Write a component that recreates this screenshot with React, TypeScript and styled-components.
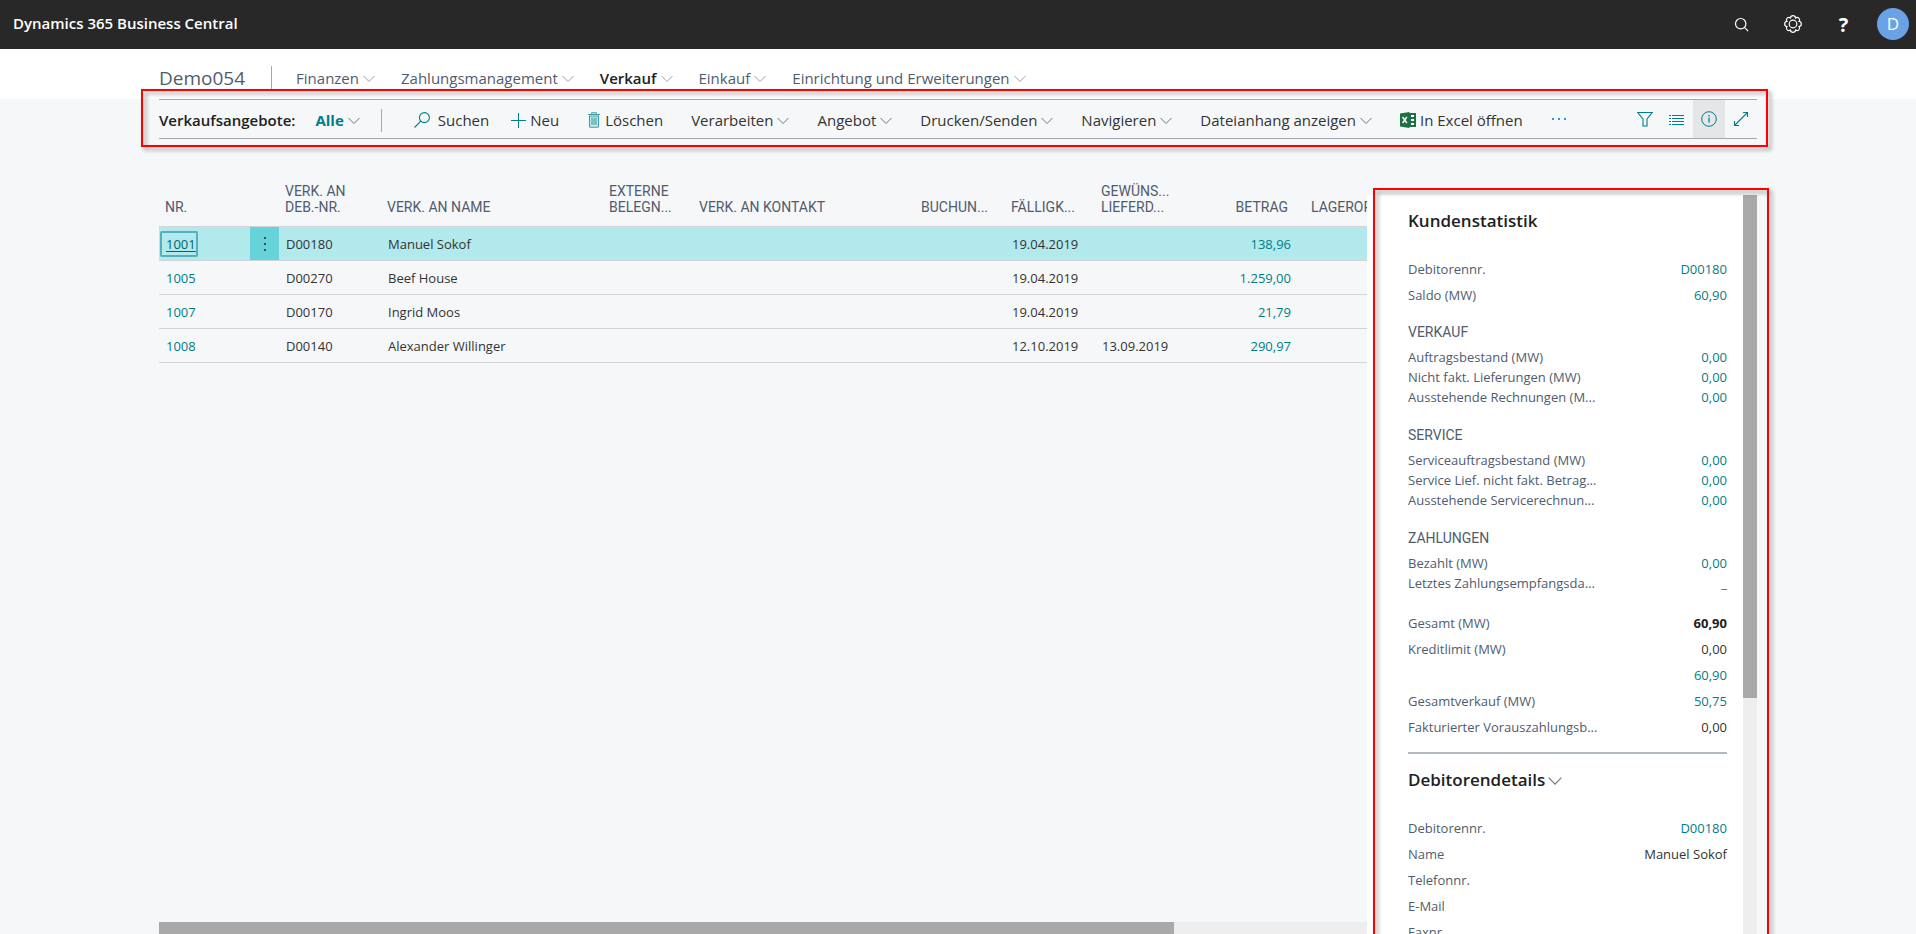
import React from "react";
import styled, { createGlobalStyle, css } from "styled-components";

const teal = "#007e87";
const slate = "#505c6d";
const ink = "#212121";

const GlobalStyle = createGlobalStyle`
  *, *::before, *::after { box-sizing: border-box; }
  body {
    margin: 0;
    background: #f6f7f9;
    color: ${ink};
    font-family: "Open Sans", "Noto Sans", sans-serif;
    font-size: 13px;
  }
  a { color: inherit; text-decoration: none; }
  button {
    margin: 0;
    padding: 0;
    border: 0;
    background: none;
    color: inherit;
    font: inherit;
    cursor: pointer;
  }
  svg { display: block; flex: none; }
`;

const Page = styled.div`
  display: flex;
  flex-direction: column;
  height: 100vh;
  overflow: hidden;
`;

/* ---------- top bar ---------- */

const TopBar = styled.header`
  display: flex;
  flex: none;
  align-items: center;
  justify-content: space-between;
  height: 49px;
  padding: 0 7px 1px 13px;
  background: #282828;
  color: #fff;
`;

const ProductName = styled.a`
  font-size: 15px;
  font-weight: 600;
  line-height: 20px;
  padding-bottom: 2px;
`;

const TopActions = styled.div`
  display: flex;
  align-items: center;
`;

const TopButton = styled.button`
  display: flex;
  align-items: center;
  justify-content: center;
  width: 51px;
  height: 48px;
  font-size: 20px;
  font-weight: 700;
`;

const Avatar = styled.button`
  width: 32px;
  height: 32px;
  margin-left: 8px;
  border-radius: 50%;
  background: #6aa2e6;
  font-size: 17px;
  line-height: 32px;
`;

/* ---------- role navigation ---------- */

const NavBar = styled.nav`
  display: flex;
  flex: none;
  align-items: center;
  height: 50px;
  padding: 7px 159px 0;
  background: #fff;
  color: ${slate};
`;

const Company = styled.a`
  font-size: 19px;
  line-height: 26px;
`;

const Divider = styled.span`
  width: 1px;
  height: 23px;
  background: #a1a8b3;
`;

const NavDivider = styled(Divider)`
  margin-left: 26px;
`;

const NavItems = styled.div`
  display: flex;
  gap: 26px;
  margin-left: 24px;
`;

const NavItem = styled.button<{ $active?: boolean }>`
  display: flex;
  align-items: center;
  gap: 4px;
  font-size: 15px;
  line-height: 20px;
  color: ${(p) => (p.$active ? ink : slate)};
  font-weight: ${(p) => (p.$active ? 600 : 400)};
  svg { color: #9aa2ad; }
`;

/* ---------- action bar ---------- */

const Content = styled.div`
  display: flex;
  flex: 1;
  flex-direction: column;
  min-height: 0;
  padding: 0 159px;
`;

const highlight = css`
  &::after {
    content: "";
    position: absolute;
    z-index: 2;
    border: 2px solid #f00;
    filter: drop-shadow(3px 3px 2px rgba(0, 0, 0, 0.4));
    pointer-events: none;
  }
`;

const ActionBar = styled.div`
  position: relative;
  display: flex;
  flex: none;
  justify-content: space-between;
  height: 40px;
  border-top: 1px solid #a1a8b3;
  border-bottom: 1px solid #a1a8b3;
  ${highlight}
  &::after { inset: -11px -11px -9px -18px; }
`;

const ActionSide = styled.div`
  display: flex;
  align-items: center;
  padding-top: 2px;
  font-size: 15px;
  line-height: 20px;
  white-space: nowrap;
`;

const ListTitle = styled.h1`
  margin: 0 20px 0 0;
  font-size: 15px;
  font-weight: 600;
`;

const ViewPicker = styled.button`
  display: flex;
  align-items: center;
  gap: 4px;
  margin-right: 21px;
  color: ${teal};
  font-weight: 700;
  svg { color: #6d7683; }
`;

const SearchButton = styled.button`
  display: flex;
  align-items: center;
  gap: 8px;
  margin: 0 21px 0 32px;
  color: #333;
  svg { color: ${teal}; }
`;

const Actions = styled.div`
  display: flex;
  gap: 28px;
`;

const Action = styled.button<{ $accent?: boolean }>`
  display: flex;
  align-items: center;
  gap: 4px;
  color: #333;
  svg { color: ${(p) => (p.$accent ? teal : "#6d7683")}; }
`;

const MoreButton = styled.button`
  height: 20px;
  svg { color: #3b93d6; }
`;

const ViewButtons = styled.div`
  display: flex;
`;

const ViewButton = styled.button<{ $pressed?: boolean }>`
  display: flex;
  align-items: center;
  justify-content: center;
  width: 32px;
  color: ${teal};
  background: ${(p) => (p.$pressed ? "#e4e6e8" : "transparent")};
`;

/* ---------- list ---------- */

const Workspace = styled.div`
  display: flex;
  flex: 1;
  min-height: 0;
`;

const ListPane = styled.main`
  display: flex;
  flex: 1;
  flex-direction: column;
  min-width: 0;
`;

const TableViewport = styled.div`
  flex: 1;
  min-height: 0;
  overflow: hidden;
`;

const Table = styled.table`
  width: 1436px;
  border-collapse: separate;
  border-spacing: 0;
  table-layout: fixed;
`;

const Col = styled.col<{ $width: number }>`
  width: ${(p) => p.$width}px;
`;

const HeadCell = styled.th<{ $numeric?: boolean }>`
  height: 88px;
  padding: 0 ${(p) => (p.$numeric ? 17 : 4)}px 11px 6px;
  border-bottom: 1px solid #d2d4d9;
  color: ${slate};
  font-family: Roboto, sans-serif;
  font-size: 14px;
  font-weight: 400;
  line-height: 16px;
  text-align: ${(p) => (p.$numeric ? "right" : "left")};
  text-transform: uppercase;
  vertical-align: bottom;
  white-space: pre-line;
`;

const Row = styled.tr<{ $selected?: boolean }>`
  background: ${(p) => (p.$selected ? "#b2e9ec" : "transparent")};
`;

const Cell = styled.td<{ $numeric?: boolean }>`
  height: 34px;
  padding: 0 ${(p) => (p.$numeric ? 14 : 4)}px 0 7px;
  border-bottom: 1px solid #d2d4d9;
  color: #333;
  line-height: 18px;
  text-align: ${(p) => (p.$numeric ? "right" : "left")};
  white-space: nowrap;
`;

const MenuCell = styled(Cell)<{ $selected?: boolean }>`
  padding: 0;
  background: ${(p) => (p.$selected ? "#66d3db" : "transparent")};
`;

const RowMenu = styled.button`
  display: flex;
  align-items: center;
  justify-content: center;
  width: 100%;
  height: 33px;
`;

const CellLink = styled.a<{ $focused?: boolean }>`
  color: ${teal};
  ${(p) =>
    p.$focused &&
    css`
      display: inline-block;
      margin-left: -6px;
      padding: 2px 0 2px 4px;
      border: 2px solid #55b1b6;
      border-radius: 2px;
      color: #00666d;
      text-decoration: underline;
      text-underline-offset: 2px;
    `}
`;

const HorizontalTrack = styled.div`
  flex: none;
  height: 12px;
  background: #eee;
`;

const HorizontalThumb = styled.div`
  width: 84%;
  height: 100%;
  background: #a9a9a9;
`;

/* ---------- fact box pane ---------- */

const FactPane = styled.aside`
  position: relative;
  display: flex;
  flex: none;
  width: 390px;
  margin-top: 56px;
  background: #fff;
  ${highlight}
  &::after { inset: -7px -12px -20px 6px; }
`;

const FactScroller = styled.div`
  flex: 1;
  min-width: 0;
  overflow: hidden;
  padding: 13px 16px 0 41px;
`;

const VerticalTrack = styled.div`
  width: 14px;
  background: #eee;
`;

const VerticalThumb = styled.div`
  height: 68%;
  background: #a9a9a9;
`;

const FactBox = styled.section`
  & + & {
    margin-top: 12px;
    padding-top: 13px;
    border-top: 2px solid #b3b9c1;
  }
`;

const FactTitle = styled.h2`
  display: flex;
  align-items: center;
  gap: 3px;
  margin: 0 0 22px;
  color: ${ink};
  font-size: 17px;
  font-weight: 600;
  line-height: 26px;
  svg { color: #6d7683; }
`;

const Fields = styled.dl<{ $beforeGroup?: boolean }>`
  margin: 0 0 ${(p) => (p.$beforeGroup ? 14 : 0)}px;
`;

const Group = styled.div`
  margin-bottom: 18px;
  &:last-of-type { margin-bottom: 17px; }
`;

const GroupTitle = styled.h3`
  margin: 0 0 5px;
  color: ${slate};
  font-family: Roboto, sans-serif;
  font-size: 14px;
  font-weight: 400;
  line-height: 20px;
  text-transform: uppercase;
`;

const Field = styled.div<{ $dense?: boolean }>`
  display: flex;
  justify-content: space-between;
  height: ${(p) => (p.$dense ? 20 : 26)}px;
  line-height: ${(p) => (p.$dense ? 20 : 26)}px;
`;

const Label = styled.dt`
  color: ${slate};
  white-space: nowrap;
`;

const Value = styled.dd<{ $bold?: boolean }>`
  margin: 0;
  font-weight: ${(p) => (p.$bold ? 700 : 400)};
  color: ${(p) => (p.$bold ? ink : "#333")};
  a { color: ${teal}; }
`;

/* ---------- icons ---------- */

const Chevron = ({ size = 12 }: { size?: number }) => (
  <svg width={size} height={size} viewBox="0 0 12 12" fill="none" stroke="currentColor" aria-hidden="true">
    <path d="M.5 4 6 9.5 11.5 4" />
  </svg>
);

const TopSearchIcon = () => (
  <svg width="15" height="15" viewBox="0 0 15 15" fill="none" stroke="#fff" strokeWidth="1.2" aria-hidden="true">
    <circle cx="6.7" cy="6.7" r="5.2" />
    <path d="m10.4 10.4 3.8 3.8" />
  </svg>
);

const petal = (i: number) => {
  const a = ((22.5 + 45 * i) * Math.PI) / 180;
  return `${(9 + 6.6 * Math.cos(a)).toFixed(2)} ${(9 + 6.6 * Math.sin(a)).toFixed(2)}`;
};
const gearPath =
  `M${petal(0)}` + [1, 2, 3, 4, 5, 6, 7, 8].map((i) => `A2.55 2.55 0 0 1 ${petal(i)}`).join("") + "Z";

const GearIcon = () => (
  <svg width="18" height="18" viewBox="0 0 18 18" fill="none" stroke="#fff" strokeWidth="1.2" aria-hidden="true">
    <path d={gearPath} />
    <circle cx="9" cy="9" r="3.8" />
  </svg>
);

const SearchIcon = () => (
  <svg width="16" height="16" viewBox="0 0 16 16" fill="none" stroke="currentColor" strokeWidth="1.1" aria-hidden="true">
    <circle cx="10.4" cy="5.6" r="5" />
    <path d="M6.8 9.2.5 15.5" />
  </svg>
);

const PlusIcon = () => (
  <svg width="16" height="16" viewBox="0 0 16 16" fill="none" stroke="currentColor" aria-hidden="true">
    <path d="M8.5 1v15M1 8.5h15" />
  </svg>
);

const TrashIcon = () => (
  <svg width="14" height="16" viewBox="0 0 14 16" fill="none" stroke="#3c9fa5" strokeWidth="1.1" aria-hidden="true">
    <path d="M1 2.5h12M4.8 2.5V.8h4.4v1.7" />
    <path d="M2.5 4v10c0 .8.5 1.3 1.3 1.3h6.4c.8 0 1.3-.5 1.3-1.3V4z" fill="#cfe8ea" />
    <path d="M5 5.5V13M7 5.5V13M9 5.5V13" />
  </svg>
);

const ExcelIcon = () => (
  <svg width="16" height="16" viewBox="0 0 16 16" aria-hidden="true">
    <path d="M9 1h7v14H9z" fill="#1e7145" />
    <path d="M11 3h3v2h-3zM11 7h3v2h-3zM11 11h3v2h-3z" fill="#fff" />
    <path d="M0 1.5 9.5 0v16L0 14.5z" fill="#1e7145" />
    <path d="m2.6 5 4.2 6M6.8 5l-4.2 6" stroke="#fff" strokeWidth="1.4" />
  </svg>
);

const MoreIcon = () => (
  <svg width="16" height="16" viewBox="0 0 16 16" fill="currentColor" aria-hidden="true">
    <path d="M1 6h2v2H1zM7 6h2v2H7zM13 6h2v2h-2z" />
  </svg>
);

const FilterIcon = () => (
  <svg width="16" height="16" viewBox="0 0 16 16" fill="none" stroke="currentColor" strokeWidth="1.1" aria-hidden="true">
    <path d="M.7 1.5h14.6L10 8v7H6V8z" />
  </svg>
);

const ListIcon = () => (
  <svg width="16" height="16" viewBox="0 0 16 16" stroke="currentColor" aria-hidden="true">
    <path d="M3 4.5h12M3 7.5h12M3 10.5h12M3 13.5h12M0 4.5h2M0 7.5h2M0 10.5h2M0 13.5h2" />
  </svg>
);

const InfoIcon = () => (
  <svg width="16" height="16" viewBox="0 0 16 16" fill="none" stroke="currentColor" aria-hidden="true">
    <circle cx="8" cy="8" r="7.3" />
    <path d="M8 6.5v5M8 4v1.4" strokeWidth="1.2" />
  </svg>
);

const ExpandIcon = () => (
  <svg width="16" height="16" viewBox="0 0 16 16" fill="none" stroke="currentColor" strokeWidth="1.1" aria-hidden="true">
    <path d="M1.5 14.5l13-13M10 1.5h4.5V6M1.5 10v4.5H6" />
  </svg>
);

const DotsIcon = () => (
  <svg width="4" height="16" viewBox="0 0 4 16" fill="#2f5559" aria-hidden="true">
    <path d="M1 1h2v2H1zM1 7h2v2H1zM1 13h2v2H1z" />
  </svg>
);

/* ---------- data ---------- */

const navItems = ["Finanzen", "Zahlungsmanagement", "Verkauf", "Einkauf", "Einrichtung und Erweiterungen"];
const menus = ["Verarbeiten", "Angebot", "Drucken/Senden", "Navigieren", "Dateianhang anzeigen"];

const columns: { title: string; width: number; numeric?: boolean }[] = [
  { title: "Nr.", width: 91 },
  { title: "", width: 29 },
  { title: "Verk. an\nDeb.-Nr.", width: 102 },
  { title: "Verk. an Name", width: 222 },
  { title: "Externe\nBelegn...", width: 90 },
  { title: "Verk. an Kontakt", width: 222 },
  { title: "Buchun...", width: 90 },
  { title: "Fälligk...", width: 90 },
  { title: "Gewüns...\nLieferd...", width: 90 },
  { title: "Betrag", width: 120, numeric: true },
  { title: "Lagerortcode", width: 290 },
];

const quotes = [
  { no: "1001", customer: "D00180", name: "Manuel Sokof", due: "19.04.2019", delivery: "", amount: "138,96" },
  { no: "1005", customer: "D00270", name: "Beef House", due: "19.04.2019", delivery: "", amount: "1.259,00" },
  { no: "1007", customer: "D00170", name: "Ingrid Moos", due: "19.04.2019", delivery: "", amount: "21,79" },
  { no: "1008", customer: "D00140", name: "Alexander Willinger", due: "12.10.2019", delivery: "13.09.2019", amount: "290,97" },
];

type Fact = { label: string; value?: string; kind?: "link" | "bold" };

const customerFacts: Fact[] = [
  { label: "Debitorennr.", value: "D00180", kind: "link" },
  { label: "Saldo (MW)", value: "60,90", kind: "link" },
];

const factGroups: { title: string; facts: Fact[] }[] = [
  {
    title: "Verkauf",
    facts: [
      { label: "Auftragsbestand (MW)", value: "0,00", kind: "link" },
      { label: "Nicht fakt. Lieferungen (MW)", value: "0,00", kind: "link" },
      { label: "Ausstehende Rechnungen (M...", value: "0,00", kind: "link" },
    ],
  },
  {
    title: "Service",
    facts: [
      { label: "Serviceauftragsbestand (MW)", value: "0,00", kind: "link" },
      { label: "Service Lief. nicht fakt. Betrag...", value: "0,00", kind: "link" },
      { label: "Ausstehende Servicerechnun...", value: "0,00", kind: "link" },
    ],
  },
  {
    title: "Zahlungen",
    facts: [
      { label: "Bezahlt (MW)", value: "0,00", kind: "link" },
      { label: "Letztes Zahlungsempfangsda...", value: "_", kind: "link" },
    ],
  },
];

const totalFacts: Fact[] = [
  { label: "Gesamt (MW)", value: "60,90", kind: "bold" },
  { label: "Kreditlimit (MW)", value: "0,00" },
  { label: "", value: "60,90", kind: "link" },
  { label: "Gesamtverkauf (MW)", value: "50,75", kind: "link" },
  { label: "Fakturierter Vorauszahlungsb...", value: "0,00" },
];

const detailFacts: Fact[] = [
  { label: "Debitorennr.", value: "D00180", kind: "link" },
  { label: "Name", value: "Manuel Sokof" },
  { label: "Telefonnr." },
  { label: "E-Mail" },
  { label: "Faxnr." },
];

const FactList = ({ facts, dense, beforeGroup }: { facts: Fact[]; dense?: boolean; beforeGroup?: boolean }) => (
  <Fields $beforeGroup={beforeGroup}>
    {facts.map((f, i) => (
      <Field key={i} $dense={dense}>
        <Label>{f.label}</Label>
        <Value $bold={f.kind === "bold"}>{f.kind === "link" ? <a href="#">{f.value}</a> : f.value}</Value>
      </Field>
    ))}
  </Fields>
);

export default function App() {
  return (
    <Page>
      <GlobalStyle />
      <TopBar>
        <ProductName href="#">Dynamics 365 Business Central</ProductName>
        <TopActions>
          <TopButton aria-label="Suchen"><TopSearchIcon /></TopButton>
          <TopButton aria-label="Einstellungen"><GearIcon /></TopButton>
          <TopButton aria-label="Hilfe">?</TopButton>
          <Avatar aria-label="Konto">D</Avatar>
        </TopActions>
      </TopBar>

      <NavBar>
        <Company href="#">Demo054</Company>
        <NavDivider />
        <NavItems>
          {navItems.map((item) => (
            <NavItem key={item} $active={item === "Verkauf"}>
              {item}
              <Chevron />
            </NavItem>
          ))}
        </NavItems>
      </NavBar>

      <Content>
        <ActionBar>
          <ActionSide>
            <ListTitle>Verkaufsangebote:</ListTitle>
            <ViewPicker>Alle<Chevron /></ViewPicker>
            <Divider />
            <SearchButton><SearchIcon />Suchen</SearchButton>
            <Actions>
              <Action $accent><PlusIcon />Neu</Action>
              <Action $accent><TrashIcon />Löschen</Action>
              {menus.map((menu) => (
                <Action key={menu}>{menu}<Chevron /></Action>
              ))}
              <Action><ExcelIcon />In Excel öffnen</Action>
              <MoreButton aria-label="Weitere Aktionen"><MoreIcon /></MoreButton>
            </Actions>
          </ActionSide>
          <ViewButtons>
            <ViewButton aria-label="Filter"><FilterIcon /></ViewButton>
            <ViewButton aria-label="Liste"><ListIcon /></ViewButton>
            <ViewButton aria-label="Infobox" $pressed><InfoIcon /></ViewButton>
            <ViewButton aria-label="Erweitern"><ExpandIcon /></ViewButton>
          </ViewButtons>
        </ActionBar>

        <Workspace>
          <ListPane>
            <TableViewport>
              <Table>
                <colgroup>
                  {columns.map((c, i) => <Col key={i} $width={c.width} />)}
                </colgroup>
                <thead>
                  <tr>
                    {columns.map((c, i) => (
                      <HeadCell key={i} $numeric={c.numeric}>{c.title}</HeadCell>
                    ))}
                  </tr>
                </thead>
                <tbody>
                  {quotes.map((q, i) => (
                    <Row key={q.no} $selected={i === 0}>
                      <Cell><CellLink href="#" $focused={i === 0}>{q.no}</CellLink></Cell>
                      <MenuCell $selected={i === 0}>
                        {i === 0 && <RowMenu aria-label="Zeilenmenü"><DotsIcon /></RowMenu>}
                      </MenuCell>
                      <Cell>{q.customer}</Cell>
                      <Cell>{q.name}</Cell>
                      <Cell />
                      <Cell />
                      <Cell />
                      <Cell>{q.due}</Cell>
                      <Cell>{q.delivery}</Cell>
                      <Cell $numeric><CellLink href="#">{q.amount}</CellLink></Cell>
                      <Cell />
                    </Row>
                  ))}
                </tbody>
              </Table>
            </TableViewport>
            <HorizontalTrack><HorizontalThumb /></HorizontalTrack>
          </ListPane>

          <FactPane>
            <FactScroller>
              <FactBox>
                <FactTitle>Kundenstatistik</FactTitle>
                <FactList facts={customerFacts} beforeGroup />
                {factGroups.map((g) => (
                  <Group key={g.title}>
                    <GroupTitle>{g.title}</GroupTitle>
                    <FactList facts={g.facts} dense />
                  </Group>
                ))}
                <FactList facts={totalFacts} />
              </FactBox>
              <FactBox>
                <FactTitle>Debitorendetails<Chevron size={14} /></FactTitle>
                <FactList facts={detailFacts} />
              </FactBox>
            </FactScroller>
            <VerticalTrack><VerticalThumb /></VerticalTrack>
          </FactPane>
        </Workspace>
      </Content>
    </Page>
  );
}
